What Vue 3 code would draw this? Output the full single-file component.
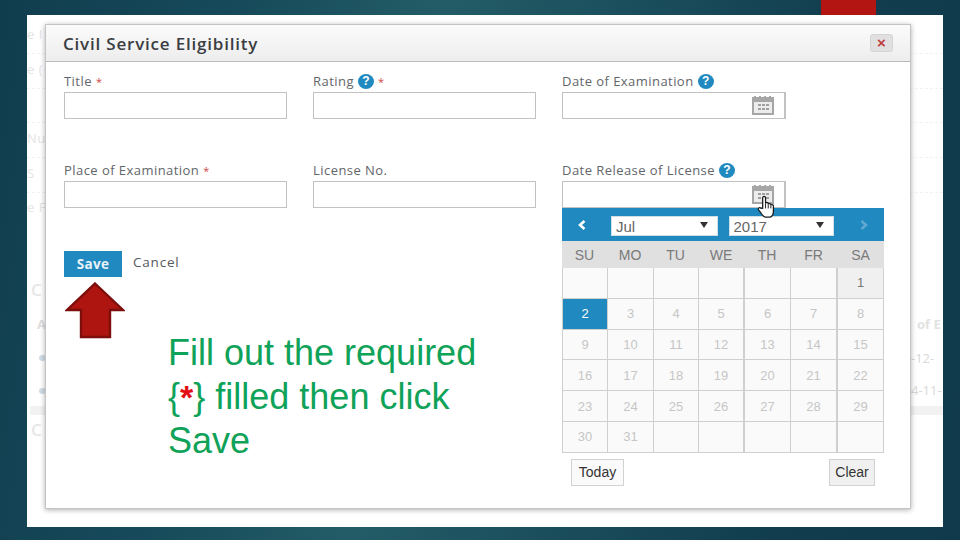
<script setup>
const weekdays = ['SU', 'MO', 'TU', 'WE', 'TH', 'FR', 'SA']
const blanks = [null, null, null, null, null, null]
const numbers = Array.from({ length: 31 }, (_, i) => i + 1)
const cells = [...blanks, ...numbers, null, null, null, null, null]
const ghostRows = [
  { text: 'e I', top: 25 },
  { text: 'e (', top: 60 },
  { text: 'Nu', top: 129 },
  { text: 'S', top: 164 },
  { text: 'e F', top: 198 }
]
</script>

<template>
  <div class="stage">
    <div class="redtab"></div>
    <div class="slide">
      <div class="ghost">
        <span v-for="g in ghostRows" :key="g.top" class="ghost-text" :style="{ top: g.top - 15 + 'px' }">{{ g.text }}</span>
        <i class="ghost-line" style="top: 38px"></i>
        <i class="ghost-line" style="top: 73px"></i>
        <i class="ghost-line" style="top: 107px"></i>
        <i class="ghost-line" style="top: 142px"></i>
        <i class="ghost-line" style="top: 177px"></i>
        <span class="ghost-big" style="top: 263px">C</span>
        <span class="ghost-bold" style="top: 300px">A</span>
        <span class="ghost-big" style="top: 403px">C</span>
        <i class="ghost-dot" style="top: 340px"></i>
        <i class="ghost-dot" style="top: 373px"></i>
        <i class="ghost-band"></i>
        <span class="ghost-right" style="top: 300px">of E</span>
        <span class="ghost-right thin" style="top: 334px">-12-</span>
        <span class="ghost-right thin" style="top: 366px">4-11-</span>
      </div>

      <div class="modal">
        <header class="modal-head">
          <h1>Civil Service Eligibility</h1>
          <button class="close">×</button>
        </header>

        <div class="modal-body">
          <div class="form-grid">
            <div class="field">
              <label>Title <em>*</em></label>
              <div class="input"></div>
            </div>
            <div class="field">
              <label>Rating <b class="help">?</b> <em>*</em></label>
              <div class="input"></div>
            </div>
            <div class="field">
              <label>Date of Examination <b class="help">?</b></label>
              <div class="input date">
                <svg class="cal" viewBox="0 0 22 19">
                  <path fill="#a6a6a6" d="M0 1h2V0h2v1h3V0h2v1h3V0h2v1h3V0h2v1h3v18H0z" />
                  <rect x="2" y="6" width="18" height="11" fill="#ececec" />
                  <path fill="#a0a0a0" d="M6 8h3v2H6zM10 8h3v2h-3zM14 8h3v2h-3zM6 12h3v2H6zM10 12h3v2h-3zM14 12h3v2h-3z" />
                </svg>
              </div>
            </div>
            <div class="field">
              <label>Place of Examination <em>*</em></label>
              <div class="input"></div>
            </div>
            <div class="field">
              <label>License No.</label>
              <div class="input"></div>
            </div>
            <div class="field">
              <label>Date Release of License <b class="help">?</b></label>
              <div class="input date">
                <svg class="cal" viewBox="0 0 22 19">
                  <path fill="#a6a6a6" d="M0 1h2V0h2v1h3V0h2v1h3V0h2v1h3V0h2v1h3v18H0z" />
                  <rect x="2" y="6" width="18" height="11" fill="#ececec" />
                  <path fill="#a0a0a0" d="M6 8h3v2H6zM10 8h3v2h-3zM14 8h3v2h-3zM6 12h3v2H6zM10 12h3v2h-3zM14 12h3v2h-3z" />
                </svg>
              </div>
            </div>
          </div>

          <div class="actions">
            <button class="save">Save</button>
            <span class="cancel">Cancel</span>
          </div>

          <div class="lower">
            <svg class="arrow" viewBox="0 0 60 57">
              <path d="M30 1.500 58 28H45V55H16V28H2Z" fill="#ae1410" stroke="#7c0f0c" stroke-width="2.400" />
            </svg>
            <p class="note">Fill out the required<br />{<span class="star">*</span>} filled then click<br />Save</p>
          </div>
        </div>

        <section class="picker">
          <div class="picker-head">
            <svg class="nav" viewBox="0 0 8 10"><path d="M6.500 1 2 5l4.500 4" fill="none" stroke="#fff" stroke-width="2.600" /></svg>
            <div class="select month">Jul<span class="caret"></span></div>
            <div class="select year">2017<span class="caret"></span></div>
            <svg class="nav next" viewBox="0 0 8 10"><path d="M1.500 1 6 5 1.500 9" fill="none" stroke="#5fa9d2" stroke-width="2.600" /></svg>
          </div>
          <div class="week">
            <span v-for="d in weekdays" :key="d">{{ d }}</span>
          </div>
          <div class="days">
            <span
              v-for="(c, i) in cells"
              :key="i"
              class="day"
              :class="{ first: c === 1, active: c === 2 }"
            >{{ c }}</span>
          </div>
          <div class="picker-foot">
            <span class="foot-btn today">Today</span>
            <span class="foot-btn clear">Clear</span>
          </div>
        </section>

        <svg class="hand" viewBox="0 0 20 24">
          <path d="M6 14V3.200C6 1 9 1 9 3.200V9c0-1.600 2.800-1.600 2.800 0v1c0-1.500 2.700-1.500 2.700 0v1c0-1.400 2.700-1.400 2.700 0.200V17c0 3-1.600 5.600-3.400 6H9c-2 0-3.400-2-5-4.500L1.700 15.500c-1-1.800 1-3 2.300-1.700z" fill="#fff" stroke="#1a1a1a" stroke-width="1.300" />
          <path d="M9 9v5M11.800 10v4M14.500 11v3" stroke="#1a1a1a" stroke-width="1" fill="none" />
        </svg>
      </div>
    </div>
  </div>
</template>

<style scoped>
.stage {
  position: relative;
  width: 960px;
  height: 540px;
  box-sizing: border-box;
  padding: 15px 17px 13px 27px;
  overflow: hidden;
  background: linear-gradient(100deg, #103d4e 0%, #164a5a 22%, #235c66 42%, #1a4d5c 62%, #113d4e 82%, #103a4b 100%);
  font-family: "Open Sans", "Liberation Sans", sans-serif;
}
.redtab {
  position: absolute;
  left: 821px;
  top: 0;
  width: 55px;
  height: 15px;
  background: #b31612;
}
.slide {
  position: relative;
  height: 100%;
  background: #fff;
  padding: 9px 32px 18px 18px;
  box-sizing: border-box;
}
.ghost { position: absolute; inset: 0; overflow: hidden; color: #e4e4e4; white-space: nowrap; }
.ghost-text { position: absolute; left: 0; font-size: 13px; letter-spacing: 0.5px; }
.ghost-line { position: absolute; left: 0; right: 0; border-top: 1px dashed #f2f2f2; }
.ghost-big { position: absolute; left: 4px; font-size: 17px; color: #e6e6e6; font-weight: 600; }
.ghost-bold { position: absolute; left: 10px; font-size: 13px; font-weight: 700; color: #dedede; }
.ghost-dot { position: absolute; left: 12px; width: 7px; height: 6px; border-radius: 50%; background: #cfdbe6; }
.ghost-band { position: absolute; left: 3px; right: 0; top: 391px; height: 9px; background: #f2f2f2; }
.ghost-right { position: absolute; left: 890px; font-size: 13px; font-weight: 700; color: #e2e2e2; }
.ghost-right.thin { left: 884px; font-weight: 400; color: #d8d8d8; }

.modal {
  position: relative;
  height: 100%;
  box-sizing: border-box;
  background: #fff;
  border: 1px solid #c4c4c4;
  box-shadow: 0 1px 5px rgba(0, 0, 0, 0.32);
}
.modal-head {
  height: 37px;
  box-sizing: border-box;
  display: flex;
  align-items: center;
  justify-content: space-between;
  padding: 0 17px 0 17px;
  background: linear-gradient(#fbfbfb, #ededed);
  border-bottom: 1px solid #bcbcbc;
}
.modal-head h1 {
  margin: 0;
  font-size: 17px;
  font-weight: 600;
  color: #3a3d42;
  letter-spacing: 0.8px;
}
.close {
  width: 23px;
  height: 18px;
  padding: 0;
  border: 1px solid #d4d4d4;
  border-radius: 3px;
  background: #e0e0e0;
  color: #bf3f3f;
  font: 700 15px/14px "Liberation Sans", sans-serif;
}
.modal-body { padding: 11px 0 0 18px; }
.form-grid {
  display: grid;
  grid-template-columns: repeat(3, 223px);
  column-gap: 26px;
  row-gap: 43px;
}
.field { display: flex; flex-direction: column; }
.field label {
  height: 16px;
  display: flex;
  align-items: center;
  gap: 4px;
  font-size: 13px;
  color: #62666a;
  letter-spacing: 0.45px;
  margin-bottom: 3px;
}
.field em { color: #d0494c; font-style: normal; font-size: 11px; }
.help {
  width: 16px;
  height: 15px;
  border-radius: 50%;
  background: #2089bf;
  color: #fff;
  font: 700 12px/15px "Liberation Sans", sans-serif;
  letter-spacing: 0;
  text-align: center;
  flex: none;
}
.input {
  height: 27px;
  box-sizing: border-box;
  border: 1px solid #c2c2c2;
  background: #fff;
}
.input.date {
  display: flex;
  justify-content: flex-end;
  align-items: center;
  padding-right: 10px;
  margin-right: -1px;
  border-right-width: 2px;
}
.cal { width: 22px; height: 19px; }
.actions {
  margin-top: 43px;
  display: flex;
  align-items: center;
  gap: 11px;
}
.save {
  width: 58px;
  height: 26px;
  border: 0;
  padding: 0;
  background: #2089bf;
  color: #e8f3f8;
  font: 700 13.500px "Open Sans", "Liberation Sans", sans-serif;
  letter-spacing: 0.3px;
}
.cancel { font-size: 13.500px; color: #55585c; letter-spacing: 0.8px; position: relative; top: -2px; }
.lower { display: flex; align-items: flex-start; margin-top: 5px; margin-left: 1px; }
.arrow { width: 60px; height: 57px; flex: none; }
.note {
  margin: 49px 0 0 43px;
  font: 400 36px/43.500px "Liberation Sans", Arial, sans-serif;
  color: #0fa259;
}
.star { color: #e20f14; font-weight: 700; font-size: 34px; }

.picker {
  position: absolute;
  left: 516px;
  top: 183px;
  width: 322px;
  font-family: "Liberation Sans", Arial, sans-serif;
}
.picker-head {
  height: 33px;
  background: #2089bf;
  display: flex;
  align-items: center;
  padding: 3px 16px 0 16px;
  box-sizing: border-box;
}
.nav { width: 8px; height: 10px; flex: none; margin-top: -3px; }
.select {
  position: relative;
  height: 20px;
  box-sizing: border-box;
  background: #fff;
  border: 1px solid #cfdfe8;
  padding-left: 4px;
  font-size: 15px;
  line-height: 20px;
  color: #666;
}
.month { width: 107px; margin-left: 25px; }
.year { width: 106px; margin-left: 11px; }
.next { margin-left: 26px; }
.caret {
  position: absolute;
  right: 9px;
  top: 5px;
  border: 4px solid transparent;
  border-top: 6px solid #333;
  border-bottom: 0;
}
.week {
  height: 27px;
  display: grid;
  grid-template-columns: 45px 46px 45px 46px 46px 47px 47px;
  background: #e0e0e0;
  align-items: center;
  text-align: center;
  font-size: 14px;
  color: #7a7a7a;
}
.days {
  display: grid;
  grid-template-columns: 45px 46px 45px 46px 46px 47px 46px;
  grid-auto-rows: 30.800px;
  border-left: 1px solid #cfcfcf;
}
.day {
  display: flex;
  align-items: center;
  justify-content: center;
  box-sizing: border-box;
  border-right: 1px solid #cfcfcf;
  border-bottom: 1px solid #cfcfcf;
  background: #fafafa;
  font-size: 13px;
  color: #c6c6c6;
}
.day:nth-child(7n + 4),
.day:nth-child(7n + 6) { border-right-width: 2px; }
.day.first { background: #f0f0f0; color: #777; }
.day.active { background: #2089bf; color: #fff; }
.picker-foot {
  display: flex;
  justify-content: space-between;
  padding: 6px 9px 0 9px;
}
.foot-btn {
  height: 27px;
  box-sizing: border-box;
  border: 1px solid #d2d2d2;
  display: flex;
  align-items: center;
  justify-content: center;
  font-size: 14px;
  color: #333;
}
.today { width: 53px; background: #fafafa; }
.clear { width: 46px; background: #f0f0f0; }
.hand {
  position: absolute;
  left: 710px;
  top: 170px;
  width: 21px;
  height: 23px;
}
</style>
